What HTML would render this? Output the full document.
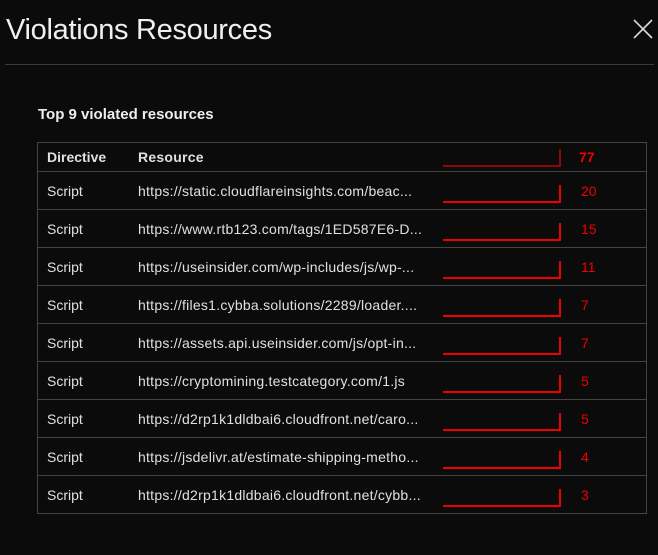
<!DOCTYPE html><html><head><style>
body{margin:0;width:658px;height:555px;background:#0b0b0b;font-family:"Liberation Sans",sans-serif;color:#e6e6e6;overflow:hidden;position:relative}
h1{position:absolute;left:6px;top:14px;margin:0;font-weight:400;font-size:29px;color:#f0f0f0;letter-spacing:-0.3px}
.x{position:absolute;left:633px;top:19px}
.hr{position:absolute;left:5px;top:64px;width:649px;height:1px;background:#3a3a3a}
h2{position:absolute;left:38px;top:106px;margin:0;font-size:15px;font-weight:700;color:#eee}
table{position:absolute;left:37px;top:142px;width:610px;border-collapse:collapse;border:1px solid #444;font-size:14px}
td{border-top:1px solid #444;height:37px;padding:0;color:#e0e0e0;vertical-align:middle}
tr.h td{height:28px;font-weight:700;border-top:none}
td.a{padding-left:9px;width:91px}
td.b{width:305px;letter-spacing:0.25px}
.bar{width:116px;height:16px;border-bottom:2px solid #e00;border-right:2px solid #e00;margin-top:6px}
tr.h .bar{border-bottom-color:#8a0a0a;border-right-color:#8a0a0a;margin-top:2px}
.n{color:#e00;padding-left:18px}
tr.h .n{color:#e00;font-weight:700;padding-left:16px}
</style></head><body>
<h1>Violations Resources</h1>
<svg class="x" width="20" height="20" viewBox="0 0 20 20"><path d="M1 1L19 19M19 1L1 19" stroke="#ddd" stroke-width="1.6"/></svg>
<div class="hr"></div>
<h2>Top 9 violated resources</h2>
<table>
<tr class="h"><td class="a">Directive</td><td class="b">Resource</td><td style="width:120px"><div class="bar"></div></td><td class="n">77</td></tr>
<tr><td class="a">Script</td><td class="b">https://static.cloudflareinsights.com/beac...</td><td><div class="bar"></div></td><td class="n">20</td></tr>
<tr><td class="a">Script</td><td class="b">https://www.rtb123.com/tags/1ED587E6-D...</td><td><div class="bar"></div></td><td class="n">15</td></tr>
<tr><td class="a">Script</td><td class="b">https://useinsider.com/wp-includes/js/wp-...</td><td><div class="bar"></div></td><td class="n">11</td></tr>
<tr><td class="a">Script</td><td class="b">https://files1.cybba.solutions/2289/loader....</td><td><div class="bar"></div></td><td class="n">7</td></tr>
<tr><td class="a">Script</td><td class="b">https://assets.api.useinsider.com/js/opt-in...</td><td><div class="bar"></div></td><td class="n">7</td></tr>
<tr><td class="a">Script</td><td class="b">https://cryptomining.testcategory.com/1.js</td><td><div class="bar"></div></td><td class="n">5</td></tr>
<tr><td class="a">Script</td><td class="b">https://d2rp1k1dldbai6.cloudfront.net/caro...</td><td><div class="bar"></div></td><td class="n">5</td></tr>
<tr><td class="a">Script</td><td class="b">https://jsdelivr.at/estimate-shipping-metho...</td><td><div class="bar"></div></td><td class="n">4</td></tr>
<tr><td class="a">Script</td><td class="b">https://d2rp1k1dldbai6.cloudfront.net/cybb...</td><td><div class="bar"></div></td><td class="n">3</td></tr>
</table>
</body></html>
